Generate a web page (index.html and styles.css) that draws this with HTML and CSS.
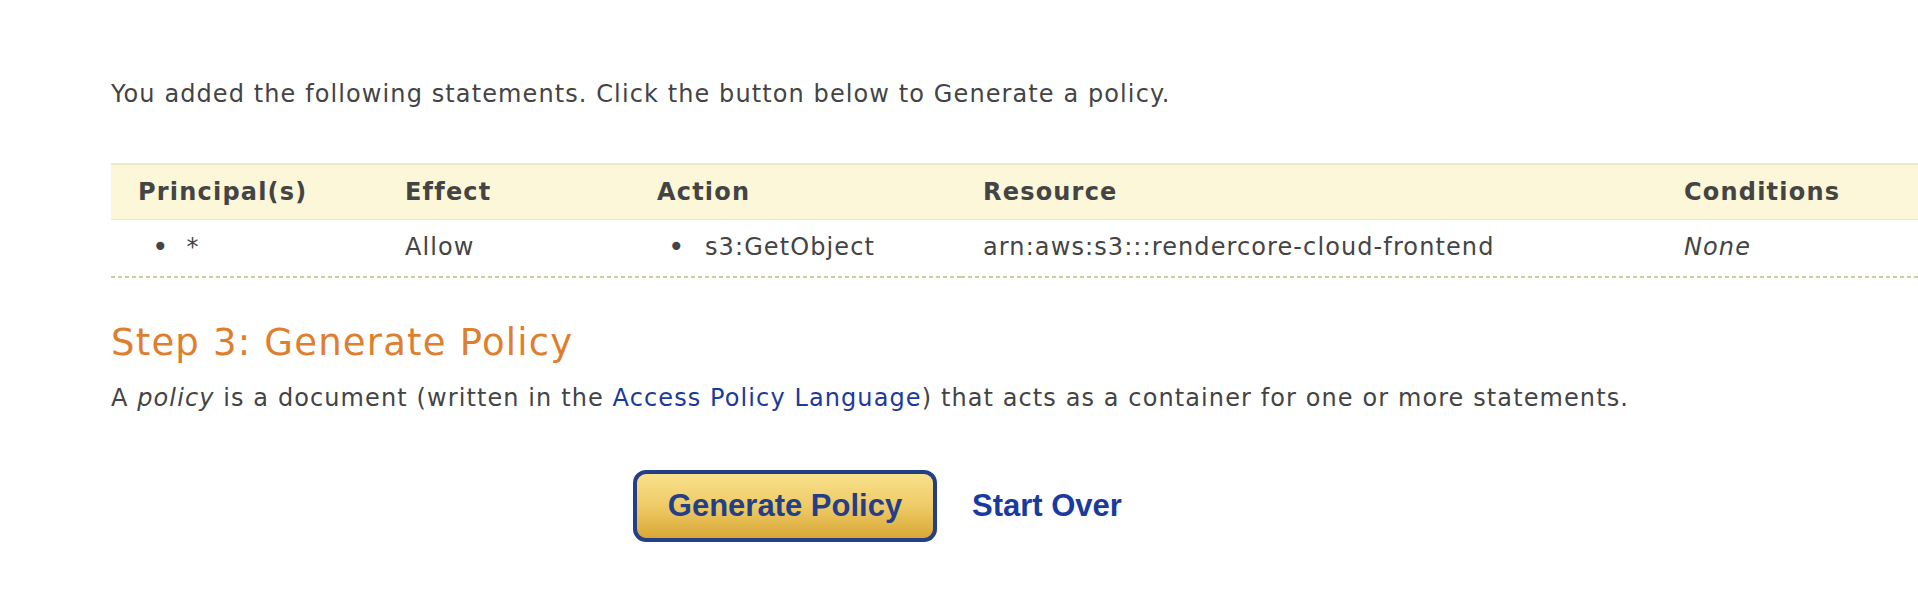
FILE: index.html
```html
<!DOCTYPE html>
<html>
<head>
<meta charset="utf-8">
<link rel="stylesheet" href="styles.css">
</head>
<body>
<div class="page">
  <p class="intro">You added the following statements. Click the button below to Generate a policy.</p>
  <table class="stmts">
    <colgroup>
      <col class="c1"><col class="c2"><col class="c3"><col class="c4"><col class="c5">
    </colgroup>
    <thead>
      <tr><th class="first">Principal(s)</th><th>Effect</th><th>Action</th><th>Resource</th><th>Conditions</th></tr>
    </thead>
    <tbody>
      <tr>
        <td><ul class="blist blist-p"><li>*</li></ul></td>
        <td>Allow</td>
        <td><ul class="blist blist-a"><li>s3:GetObject</li></ul></td>
        <td>arn:aws:s3:::rendercore-cloud-frontend</td>
        <td><em>None</em></td>
      </tr>
    </tbody>
  </table>
  <h2 class="step">Step 3: Generate Policy</h2>
  <p class="desc">A <em>policy</em> is a document (written in the <a href="#">Access Policy Language</a>) that acts as a container for one or more statements.</p>
  <div class="actions">
    <button class="gen">Generate Policy</button>
    <a class="over" href="#">Start Over</a>
  </div>
</div>
</body>
</html>
```
FILE: styles.css
```css
html, body {
  margin: 0;
  padding: 0;
  background: #ffffff;
}
.page {
  padding-left: 111px;
  font-family: Verdana, "DejaVu Sans", sans-serif;
  font-size: 24px;
  line-height: 28px;
  letter-spacing: 1.1px;
  color: #444444;
}
.intro {
  margin: 80px 0 0 0;
}
.stmts {
  margin-top: 55px;
  border-collapse: collapse;
  table-layout: fixed;
  width: 1807px;
}
.c1 { width: 272px; }
.c2 { width: 252px; }
.c3 { width: 326px; }
.c4 { width: 701px; }
.c5 { width: 256px; }
.stmts th {
  text-align: left;
  font-weight: bold;
  letter-spacing: 1.2px;
  background: #fbf7d8;
  border-top: 2px solid #efebc6;
  border-bottom: 1px solid #ebe7c0;
  padding: 13px 22px 13px 22px;
  color: #444444;
}
.stmts th.first {
  padding-left: 27px;
}
.stmts td {
  padding: 13px 22px 17px 22px;
  vertical-align: top;
  background: repeating-linear-gradient(to right, #cfcd9b 0, #cfcd9b 4px, transparent 4px, transparent 7px) left bottom / 100% 2px no-repeat;
}
.blist {
  margin: 0;
  list-style: none;
}
.blist li::before {
  content: "\2022";
  display: inline-block;
  font-size: 28px;
  letter-spacing: 0;
  vertical-align: top;
}
.blist-p {
  padding: 0 0 0 19px;
}
.blist-p li::before {
  width: 34.5px;
}
.blist-a {
  padding: 0 0 0 11px;
}
.blist-a li::before {
  width: 37px;
}
.step {
  margin: 43px 0 0 0;
  font-size: 37px;
  line-height: 44px;
  letter-spacing: 1.2px;
  font-weight: normal;
  color: #de7f30;
}
.desc {
  margin: 19px 0 0 0;
}
.desc a {
  color: #1b3a9c;
  text-decoration: none;
}
.actions {
  margin: 58px 0 0 522px;
  display: flex;
  align-items: center;
  gap: 35px;
  letter-spacing: 0;
}
.gen {
  width: 304px;
  height: 72px;
  border: 4px solid #243f88;
  border-radius: 13px;
  background: linear-gradient(to bottom, #f8e18c 0%, #eecb66 50%, #d9a736 100%);
  font-family: "Liberation Sans", Arial, sans-serif;
  font-weight: bold;
  font-size: 31px;
  color: #243f88;
  padding: 0;
}
.over {
  font-family: "Liberation Sans", Arial, sans-serif;
  font-weight: bold;
  font-size: 31px;
  color: #1b3aa0;
  text-decoration: none;
}
```
